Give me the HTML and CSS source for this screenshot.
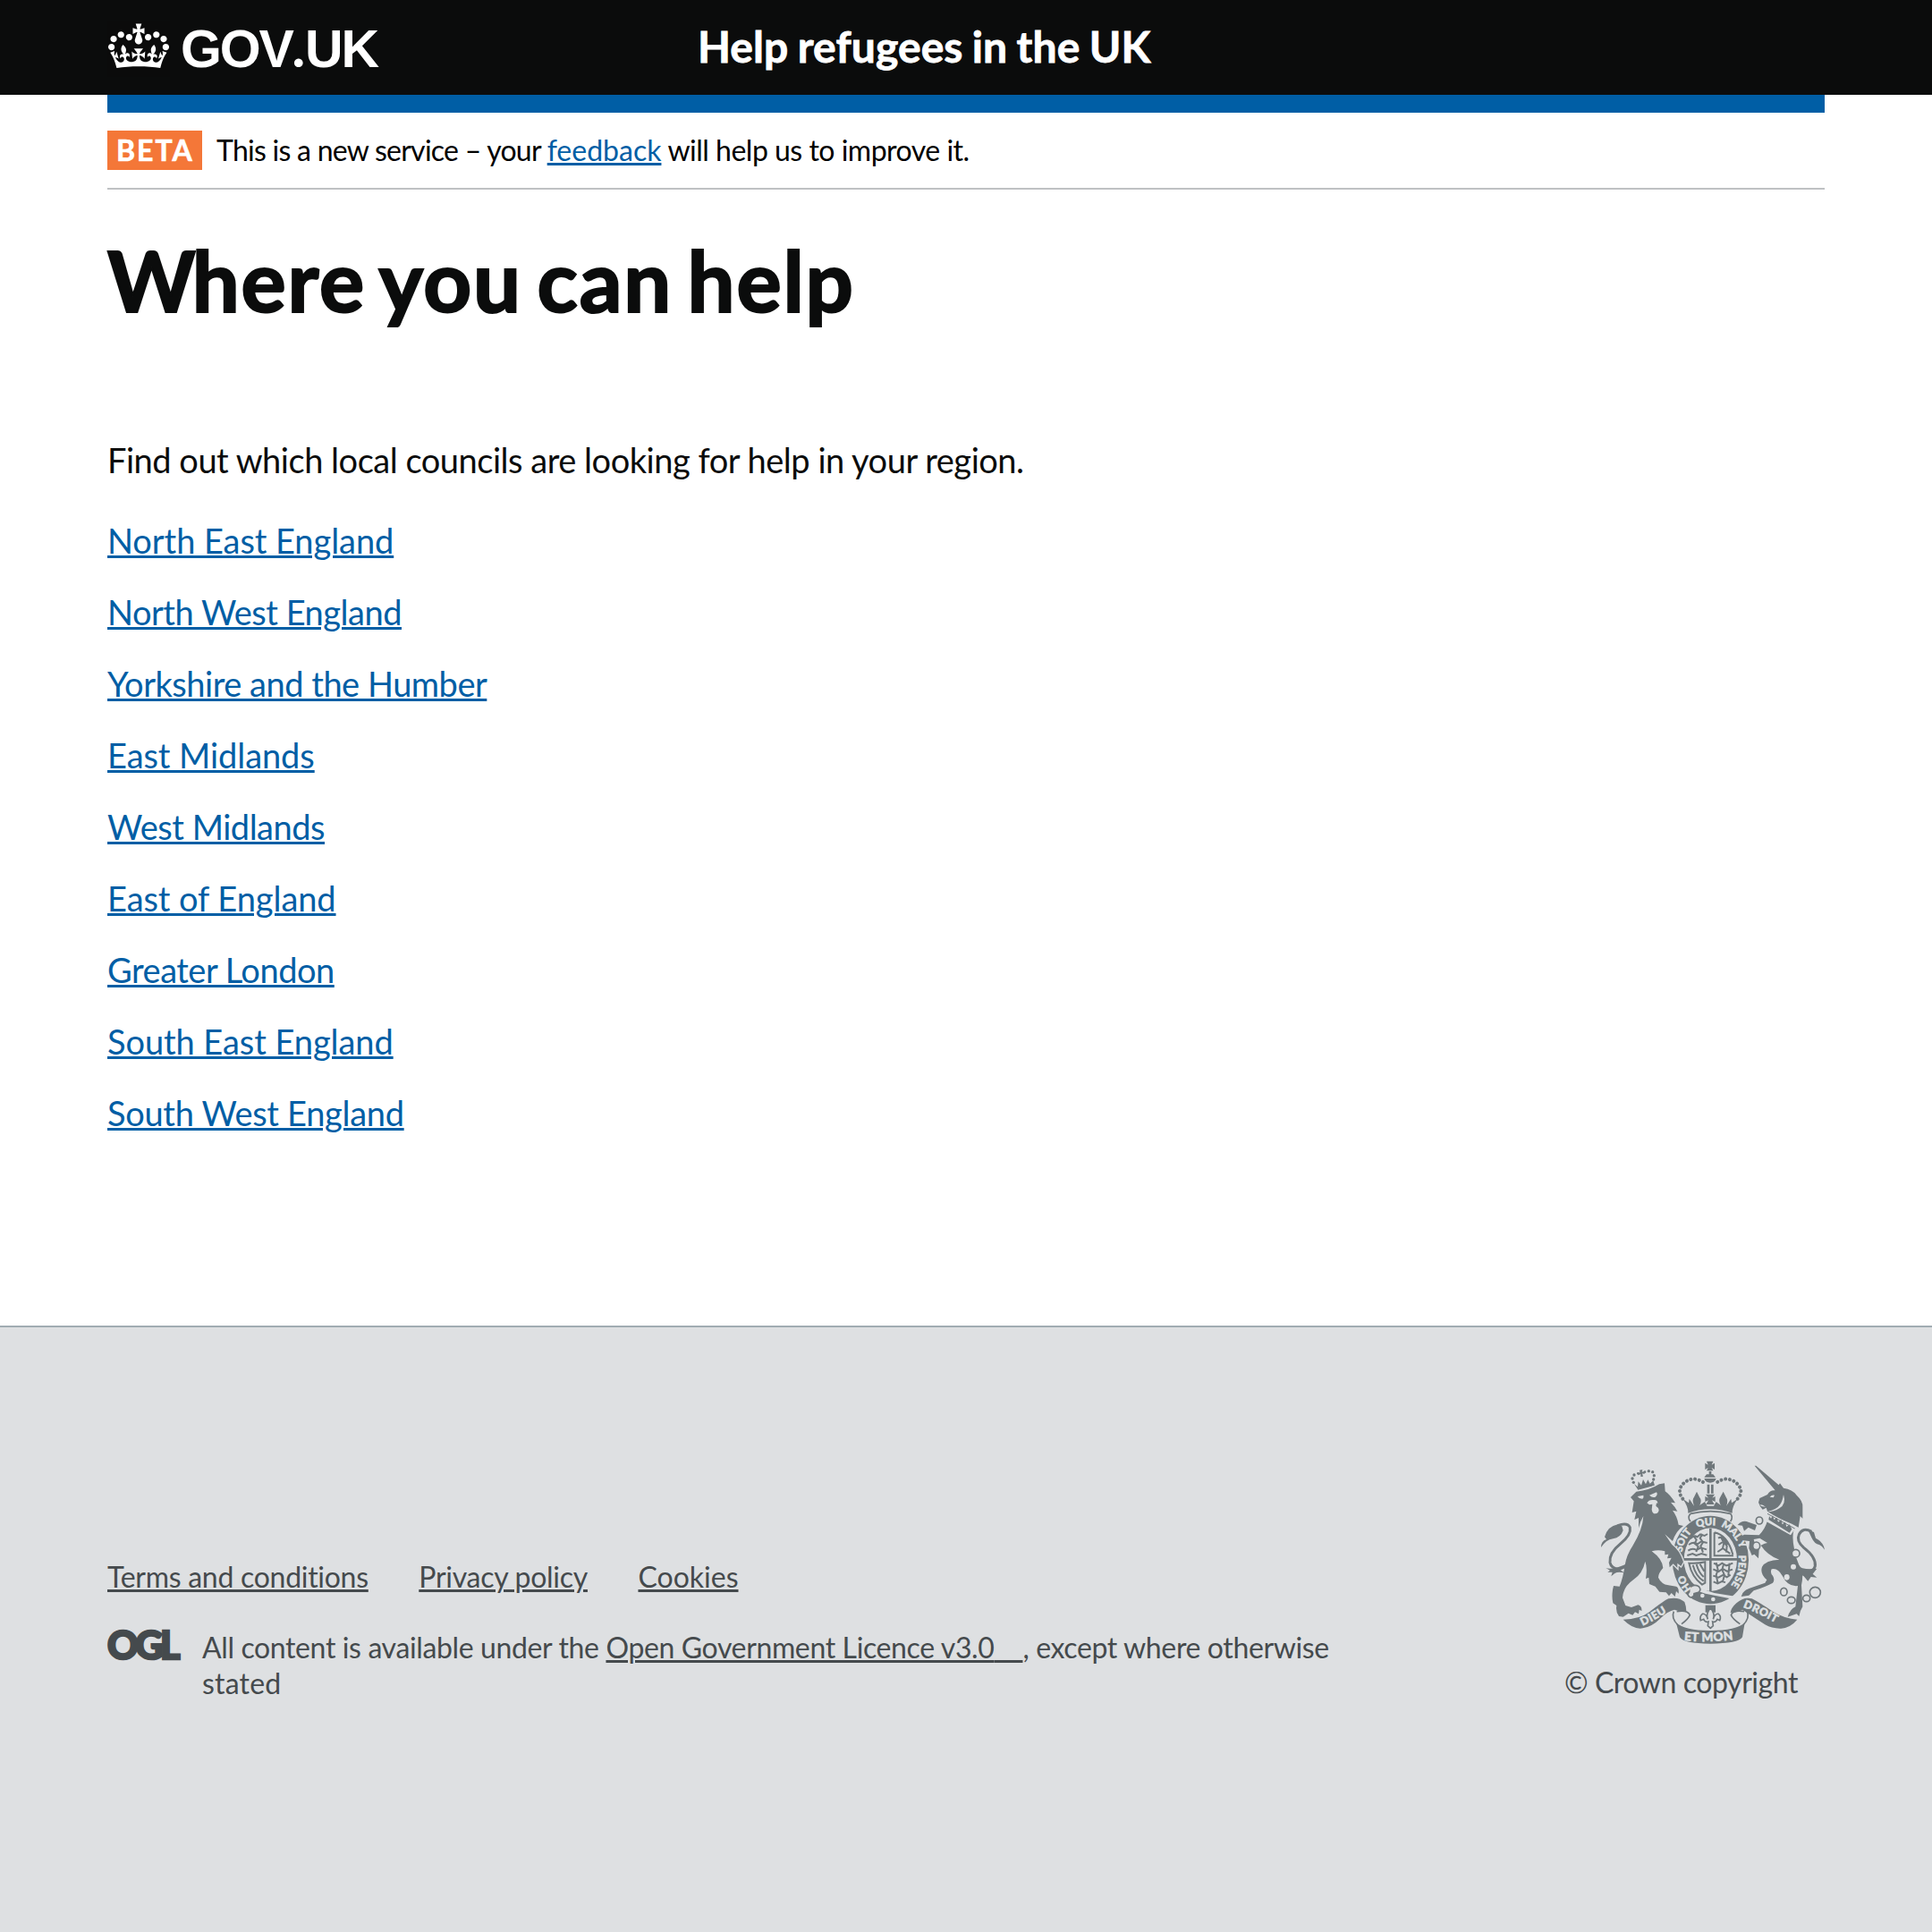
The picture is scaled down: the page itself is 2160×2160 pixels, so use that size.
FILE: index.html
```html
<!DOCTYPE html>
<html lang="en">
<head>
<meta charset="utf-8">
<title>Where you can help</title>
<link rel="stylesheet" href="styles.css">
</head>
<body>
<header class="header">
  <div class="container header-row">
    <a class="logo" href="#">
      <svg class="crown" viewBox="0 0 132 97" aria-hidden="true"><path fill="#fff" fill-rule="evenodd" d="M25 30.2c3.5 1.5 7.7-.2 9.1-3.7 1.5-3.6-.2-7.8-3.9-9.2-3.6-1.4-7.6.3-9.1 3.9-1.4 3.5.3 7.5 3.9 9zM9 39.5c3.6 1.5 7.8-.2 9.2-3.7 1.5-3.6-.2-7.8-3.9-9.1-3.6-1.5-7.6.2-9.1 3.8-1.4 3.5.3 7.5 3.8 9zM4.4 57.2c3.5 1.5 7.7-.2 9.1-3.8 1.5-3.6-.2-7.7-3.9-9.1-3.5-1.5-7.6.3-9.1 3.8-1.4 3.5.3 7.6 3.9 9.1zm38.3-21.4c3.5 1.5 7.7-.2 9.1-3.8 1.5-3.6-.2-7.7-3.9-9.1-3.6-1.5-7.6.3-9.1 3.8-1.3 3.6.4 7.7 3.9 9.1zm64.4-5.6c-3.6 1.5-7.8-.2-9.1-3.7-1.5-3.6.2-7.8 3.8-9.2 3.6-1.4 7.7.3 9.2 3.9 1.3 3.5-.4 7.5-3.9 9zm15.9 9.3c-3.6 1.5-7.7-.2-9.1-3.7-1.5-3.6.2-7.8 3.7-9.1 3.6-1.5 7.7.2 9.2 3.8 1.5 3.5-.3 7.5-3.8 9zm4.7 17.7c-3.6 1.5-7.8-.2-9.2-3.8-1.5-3.6.2-7.7 3.9-9.1 3.6-1.5 7.7.3 9.2 3.8 1.3 3.5-.4 7.6-3.9 9.1zM89.3 35.8c-3.6 1.5-7.8-.2-9.2-3.8-1.4-3.6.2-7.7 3.9-9.1 3.6-1.5 7.7.3 9.2 3.8 1.4 3.6-.3 7.7-3.9 9.1zM69.7 17.7l8.9 4.7V9.3l-8.9 2.8c-.2-.3-.5-.6-.9-.9L72.4 0H59.6l3.5 11.2c-.3.3-.6.5-.9.9l-8.8-2.8v13.1l8.8-4.7c.3.3.6.7.9.9l-5 15.4v.1c-.2.8-.4 1.6-.4 2.4 0 4.1 3.1 7.5 7 8.1h.2c.3 0 .7.1 1 .1.4 0 .7 0 1-.1h.2c4-.6 7.1-4.1 7.1-8.1 0-.8-.1-1.7-.4-2.4V34l-5.1-15.4c.4-.2.7-.6 1-.9zM66 92.8c16.9 0 32.8 1.1 47.1 3.2 4-16.9 8.9-26.7 14-33.5l-9.6-3.4c1 4.9 1.1 7.2 0 10.2-1.5-1.4-3-4.3-4.2-8.7L108.6 76c2.8-2 5-3.2 7.5-3.3-4.4 9.4-10 11.9-13.6 11.2-4.3-.8-6.3-4.6-5.6-7.9 1-4.7 5.7-5.9 8-.5 4.3-8.7-3-11.4-7.6-8.8 7.1-7.2 7.9-13.5 2.1-21.1-8 6.1-8.1 12.3-4.5 20.8-4.7-5.4-12.1-2.5-9.5 6.2 3.4-5.2 7.9-2 7.2 3.1-.6 4.3-6.4 7.8-13.5 7.2-10.3-.9-10.9-8-11.2-13.8 2.5-.5 7.1 1.8 11 7.3L80.2 60c-4.1 4.4-8 5.3-12.3 5.4 1.4-4.4 8-11.6 8-11.6H55.5s6.4 7.2 7.9 11.6c-4.2-.1-8-1-12.3-5.4l1.4 16.4c3.9-5.5 8.5-7.7 10.9-7.3-.3 5.8-.9 12.8-11.1 13.8-7.2.6-12.9-2.9-13.5-7.2-.7-5 3.8-8.3 7.1-3.1 2.7-8.7-4.6-11.6-9.4-6.2 3.7-8.5 3.6-14.7-4.6-20.8-5.8 7.6-5 13.9 2.2 21.1-4.7-2.6-11.9.1-7.7 8.8 2.3-5.5 7.1-4.2 8.1.5.7 3.3-1.3 7.1-5.7 7.9-3.5.7-9-1.8-13.5-11.2 2.5.1 4.7 1.3 7.5 3.3l-4.7-15.4c-1.2 4.4-2.7 7.2-4.3 8.7-1.1-3-.9-5.3 0-10.2l-9.5 3.4c5 6.9 9.9 16.7 14 33.5 14.8-2.1 30.8-3.2 47.7-3.2z"/></svg>
      <span class="wordmark">GOV<span class="dot">.</span>UK</span>
    </a>
    <span class="service">Help refugees in the UK</span>
  </div>
</header>
<div class="container">
  <div class="bar"></div>
  <div class="phase">
    <strong class="tag">BETA</strong>
    <span class="phase-text">This is a new service – your <a href="#">feedback</a><span class="after"> will help us to improve it.</span></span>
  </div>
  <main class="main">
    <h1>Where you can help</h1>
    <p class="lead">Find out which local councils are looking for help in your region.</p>
    <ul class="regions">
      <li><a href="#">North East England</a></li>
      <li class="tight"><a href="#">North West England</a></li>
      <li class="tight"><a href="#">Yorkshire and the Humber</a></li>
      <li><a href="#">East Midlands</a></li>
      <li class="tight"><a href="#">West Midlands</a></li>
      <li><a href="#">East of England</a></li>
      <li class="tight"><a href="#">Greater London</a></li>
      <li><a href="#">South East England</a></li>
      <li class="mid"><a href="#">South West England</a></li>
    </ul>
  </main>
</div>
<footer class="footer">
  <div class="container footer-row">
    <div class="footer-main">
      <ul class="links">
        <li><a href="#">Terms and conditions</a></li>
        <li><a href="#">Privacy policy</a></li>
        <li><a class="cookies" href="#">Cookies</a></li>
      </ul>
      <div class="licence">
        <span class="ogl">OGL</span>
        <span class="licence-text">All content is available under the <a href="#">Open Government Licence v3.0<span class="blank">&nbsp;&nbsp;&nbsp;&nbsp;</span></a>, except where otherwise <span class="last">stated</span></span>
      </div>
    </div>
    <div class="copyright">
      <svg class="crest" viewBox="210 70 750 615" aria-hidden="true">
        <defs>
          <path id="ring-left" d="M514 500Q487 470 482 415"/>
          <path id="ring-soit" d="M482 378Q490 318 540 291"/>
          <path id="ring-qui" d="M531 294Q577 280 626 293"/>
          <path id="ring-mal" d="M611 291Q660 310 684 385"/>
          <path id="ring-pense" d="M671 388Q677 465 624 510"/>
          <path id="dieu" d="M350 624Q400 600 456 562"/>
          <path id="mon" d="M488 673Q577 682 672 667"/>
          <path id="droit" d="M686 562Q740 582 816 626"/>
        </defs>
        <g fill="#6f777b">
          <!-- imperial crown -->
          <path d="M564 72h22l-5 12 10-6v22l-10-6 5 10h-22l5-10-10 6V78l10 6zM572 106h8v10h6l8 10h-38l8-10h8zM556 130h40q-4 14-20 14t-20-14z"/>
          <path d="M566 150h8v30h-8zM579 150h8v30h-8zM561 183h30l-8 12 10-5v18l-11-5 8 14h-28l8-14-11 5v-18l11 5z"/>
          <path fill="none" stroke="#6f777b" stroke-width="12" stroke-linecap="round" stroke-dasharray="0.1 14.2" d="M484 198Q466 176 480 154 498 130 528 132 546 136 560 148M668 198Q688 176 672 154 654 130 624 132 606 136 592 148"/>
          <path d="M484 198L504 212 506 198 522 222Q514 200 522 192L531 174 540 192Q550 204 540 220L558 208 566 222H588L596 208 612 220Q602 204 610 192L620 174 629 192Q638 204 630 222L646 198 648 212 668 198Q648 226 650 246 576 220 502 246 504 226 484 198z"/>
          <path fill="none" stroke="#6f777b" stroke-width="5" d="M510 248Q577 232 644 248 654 260 644 274M510 248Q498 260 510 274"/>
          <!-- garter -->
          <ellipse cx="577" cy="403" rx="128" ry="148"/>
          <ellipse cx="577" cy="402" rx="89" ry="106" fill="#dee0e2"/>
          <path d="M488 397h178v8H488zM573 297h8v212h-8z"/>
          <g fill="none" stroke="#6f777b" stroke-width="6">
            <path d="M509 332q12-14 24-6l10-9 14 5 10-6M504 352q18-12 30-2l12-9 20 5M502 372q14-10 28-2l14-8 20 6M499 388l18-6 12 6 18-6 18 5M520 322l10 14-6 12 12 10-7 18M550 316l-8 14 10 14-8 12 8 22"/>
            <path d="M590 311v78h64M590 311q44 8 62 74M603 330q12-7 18 2l14 20M604 352l16-10 12 14-2 22M601 376l18-12 10 8 14 10M612 326l10 20-4 18"/>
            <path d="M505 414q30 2 54-4v70l-10 6q-35-26-44-72zM518 420q10 38 36 54M530 418q8 28 24 42M542 417l14 24"/>
            <path d="M588 414l16 8 12-8 14 8 22-8M586 434l18 8 14-9 14 8 19-6M586 456l18 6 16-9 12 8 12-8M587 476l14 6 14-7 12 3M596 412l6 24-6 18 6 28M622 414l-6 22 8 18-6 22M641 414l-4 40"/>
          </g>
          <path fill="#dee0e2" d="M532 494L546 500 590 514 664 526 640 532 560 516 530 506z"/>
          <g fill="#dee0e2"><circle cx="550" cy="523" r="7"/><circle cx="586" cy="535" r="7"/></g>
          <path fill="#dee0e2" stroke="#6f777b" stroke-width="5" d="M506 500q12-18 32-8 10 12-2 20l-14 4q0 14-14 12-12-8-2-18z"/>
          <g class="motto" fill="#dee0e2" stroke="#dee0e2">
            <text><textPath href="#ring-left">HO</textPath></text>
            <text><textPath href="#ring-soit">SOIT</textPath></text>
            <text><textPath href="#ring-qui">QUI</textPath></text>
            <text><textPath href="#ring-mal">MAL Y</textPath></text>
            <text><textPath href="#ring-pense">PENSE</textPath></text>
          </g>
          <!-- lion's crown -->
          <circle cx="319" cy="143" r="5"/><circle cx="315" cy="130" r="5"/><circle cx="321" cy="118" r="5"/><circle cx="334" cy="113" r="4"/>
          <circle cx="357" cy="108" r="4"/><circle cx="370" cy="105" r="5"/><circle cx="383" cy="108" r="5"/><circle cx="388" cy="120" r="5"/><circle cx="386" cy="133" r="5"/>
          <path d="M339 102l10-2-2 8 8-2 1 9-8-2 3 10-8 1 0-9-8 4-2-8 8-1z"/>
          <path d="M321 148L333 158 335 140 345 153 351 133 360 149 367 134 374 147 385 137 390 153 334 168z"/>
          <!-- lion -->
          <path stroke="#dee0e2" stroke-width="8" paint-order="stroke" d="M309 193L328 174Q372 170 405 149L423 146 425 173Q440 182 459 212L444 210Q458 224 466 240L450 237Q466 258 470 285L486 289Q462 305 450 340L424 317 448 352Q474 370 486 410L478 424 466 414 466 430 452 416 440 428 438 412 446 396 432 398 436 384 424 386 424 374Q402 368 380 374 416 400 418 430 402 448 402 462 412 484 436 488L462 492Q472 496 470 516L462 508 458 526 446 514 438 524 428 512 406 510 392 492 372 484 370 462 360 466Q366 430 358 408 350 448 318 470 284 494 282 530L292 556 312 562 334 554Q348 558 346 574L338 570 336 584 324 578 316 588 302 582 284 594 270 592Q258 576 262 556L250 548Q244 520 252 490L272 492Q284 462 290 420 296 386 316 356 350 300 352 256L342 276 336 296 336 262 322 268 328 240 314 244 320 206Z"/>
          <g fill="#dee0e2"><path d="M332 190l20-4q2 10-4 12-10 0-16-8zM372 186l24-10q6 8-4 16-10 4-20-6z"/><path d="M364 212q6-12 22-10 14-2 14 12l-4-2-2 10q10 6 10 14-2 12-12 12t-12-14l2-18-10 2z"/></g>
          <path d="M210 361Q210 340 228 334L222 326Q232 290 266 284L280 290 284 304Q276 328 250 332 226 336 210 361z"/>
          <path fill="none" stroke="#6f777b" stroke-width="9" d="M266 288Q298 276 307 294 312 318 276 348 236 380 240 412 244 432 270 434L296 424"/>
          <path d="M226 430Q250 438 300 414L276 438 292 448Q268 440 256 448L244 458 248 444 232 444 240 438z"/>
          <!-- unicorn -->
          <path d="M725 87L730 87 806 152 810 146 822 162Q852 166 866 186 888 206 886 226L886 264 878 256 872 294 850 282Q800 262 768 240L764 228 752 234Q742 224 738 210L742 196 768 184Q776 168 794 170Z"/>
          <g fill="#dee0e2"><path d="M776 192q6-8 16-6l-4 8zM742 217q12 0 20 8l-14-2zM822 184q10 32-14 46-18 12-42 12 34-8 44-24 8-10 12-34z"/></g>
          <path d="M768 272L846 318 856 304Q850 330 858 366 862 394 874 420 892 440 882 488L886 560Q878 572 874 592L866 584 836 594Q844 568 862 560L870 490Q836 494 818 456 802 428 782 434 776 446 786 456 794 470 786 480 760 494 722 506L706 522 680 526Q686 504 708 498L760 480 766 470Q742 450 750 426 762 404 808 402 768 388 746 354 760 346 768 346L742 330 722 334 726 348 740 366 738 398 724 384 716 388 706 364 708 340 688 338 668 330 690 318 740 320Q760 300 768 272z"/>
          <path d="M668 286Q684 268 704 276L732 286 726 304 704 294 690 306 684 288z"/>
          <path d="M960 369Q956 344 930 330L924 310 904 302 916 328Q926 350 942 352 952 356 960 369z"/>
          <path fill="none" stroke="#6f777b" stroke-width="9" d="M916 308Q886 292 874 318 864 340 890 362 932 394 928 424 922 446 890 440"/>
          <path d="M868 420Q886 438 934 432L920 450 934 462 914 460 904 474 890 458 872 448z"/>
          <g fill="#dee0e2"><circle cx="855" cy="426" r="9"/><ellipse cx="833" cy="461" rx="9" ry="10"/></g>
          <path fill="#dee0e2" d="M768 244L862 296 846 320 764 274z"/>
          <path d="M772 268L774 256 780 264 786 254 790 268 800 262 804 276 814 268 818 284 828 276 832 292 842 284 850 300 842 312z"/>
          <path fill="none" stroke="#6f777b" stroke-width="3" d="M768 248L860 298"/>
          <g fill="#dee0e2" stroke="#6f777b" stroke-width="5">
            <ellipse cx="741" cy="271" rx="11" ry="12"/><ellipse cx="731" cy="356" rx="12" ry="13"/><circle cx="863" cy="381" r="13"/>
            <ellipse cx="823" cy="510" rx="11" ry="13"/><ellipse cx="848" cy="538" rx="13" ry="11"/><ellipse cx="899" cy="532" rx="12" ry="11"/><circle cx="928" cy="512" r="18"/>
          </g>
          <!-- plinth with lily -->
          <path d="M560 555h34v24h-34z"/>
          <path fill="#dee0e2" stroke="#6f777b" stroke-width="5" d="M577 564Q560 584 568 602 562 582 550 584 540 592 544 606L554 602Q560 614 570 610L568 624 577 632 586 624 584 610Q594 614 600 602L608 606Q614 592 604 584 592 582 586 602 594 584 577 564z"/>
          <!-- ribbon -->
          <path d="M284 603Q340 602 372 578 420 540 436 533 470 526 490 544 496 560 496 574 476 578 456 570 434 574 408 600 382 626 350 632 320 638 284 603zM868 603Q826 600 786 576 738 544 716 533 688 526 664 548 646 564 644 580 670 578 684 570 712 588 760 620 784 634 814 633 846 630 868 603zM462 614Q490 640 576 640 664 640 692 614L684 662Q670 684 576 684 486 684 474 662z"/>
          <path fill="none" stroke="#6f777b" stroke-width="5" d="M464 576Q500 570 508 588 502 602 480 618M454 576Q444 598 468 622M690 576Q652 570 646 588 652 602 676 618M700 576Q710 598 686 622"/>
          <g class="motto" fill="#dee0e2" stroke="#dee0e2">
            <text class="wide"><textPath href="#dieu">DIEU</textPath></text>
            <text class="big"><textPath href="#mon">ET MON</textPath></text>
            <text class="wide"><textPath href="#droit">DROIT</textPath></text>
          </g>
        </g>
      </svg>
      <span class="crown-copy">© Crown copyright</span>
    </div>
  </div>
</footer>
</body>
</html>
```
FILE: styles.css
```css
* { box-sizing: border-box; }
body { margin: 0; background: #fff; color: #0b0c0c; font-family: Lato, "Liberation Sans", sans-serif; }
ul { list-style: none; margin: 0; padding: 0; }
a { color: #005ea5; text-decoration-line: underline; text-decoration-thickness: 3px; text-underline-offset: 2px; }
.container { width: 1920px; margin: 0 auto; }

.header { height: 106px; background: #0b0c0c; color: #fff; }
.header-row { display: flex; align-items: flex-start; }
.logo { width: 660px; display: flex; align-items: flex-start; gap: 12px; color: #fff; text-decoration: none; }
.crown { width: 70px; height: 62px; padding: 2px 1px 9px; margin-top: 24px; background: #0b0b0b; flex: none; }
.wordmark { font: 700 59px/60px "Liberation Sans", Arial, sans-serif; letter-spacing: -2.1px; margin-top: 23px; white-space: nowrap; }
.dot { font-family: Lato, sans-serif; font-weight: 900; letter-spacing: 0; }
.service { font-size: 48px; font-weight: 700; line-height: 60px; letter-spacing: .1px; word-spacing: -1.5px; margin-top: 22px; -webkit-text-stroke: .8px; }

.bar { height: 20px; background: #005ea5; }
.phase { display: flex; height: 86px; padding-top: 20px; border-bottom: 2px solid #bfc1c3; color: #000; line-height: 44px; font-size: 32px; }
.tag { width: 106px; height: 44px; margin-right: 16px; padding-left: 10px; background: #f47738; color: #fff; letter-spacing: 2px; line-height: 43px; -webkit-text-stroke: .6px; }
.phase-text { letter-spacing: -.74px; line-height: 43px; }
.phase-text a { letter-spacing: 0; }
.after { letter-spacing: -.5px; }

.main { height: 1270px; padding-top: 51px; }
h1 { margin: 0; font-size: 94px; line-height: 100px; letter-spacing: 1.8px; word-spacing: -8px; -webkit-text-stroke: 2.2px; }
h1::first-letter { letter-spacing: -4px; }
.lead { margin: 126px 0 40px; font-size: 38px; line-height: 50px; letter-spacing: -.48px; }
.regions li { height: 50px; margin-bottom: 30px; font-size: 38px; line-height: 50px; letter-spacing: -.07px; }
.regions .tight { letter-spacing: -.48px; }
.regions .mid { letter-spacing: -.3px; }

.footer { height: 678px; border-top: 2px solid #a1acb2; background: #dee0e2; color: #454a4d; font-size: 32px; line-height: 40px; }
.footer a { color: #454a4d; }
.footer-row { display: flex; justify-content: space-between; padding-top: 149px; }
.footer-main { width: 1400px; padding-top: 110px; }
.links { display: flex; gap: 56.5px; letter-spacing: -.28px; }
.links .cookies { letter-spacing: 0; }
.licence { display: flex; align-items: flex-start; margin-top: 39px; }
.ogl { width: 106px; flex: none; font-size: 43px; font-weight: 900; letter-spacing: -3.5px; line-height: 34px; -webkit-text-stroke: 2.5px #454a4d; }
.licence-text { letter-spacing: -.37px; }
.last { letter-spacing: .2px; }
.blank { letter-spacing: -.2px; }
.copyright { display: flex; flex-direction: column; width: 291px; }
.crest { width: 250px; height: 205px; margin: 0 0 23px auto; }
.crown-copy { letter-spacing: -.43px; }
.motto { font: 900 34px Lato, sans-serif; stroke-width: 1.5px; }
.motto .big { font-size: 41px; letter-spacing: 1px; }
.motto .wide { font-size: 37px; letter-spacing: 1.5px; }
```
